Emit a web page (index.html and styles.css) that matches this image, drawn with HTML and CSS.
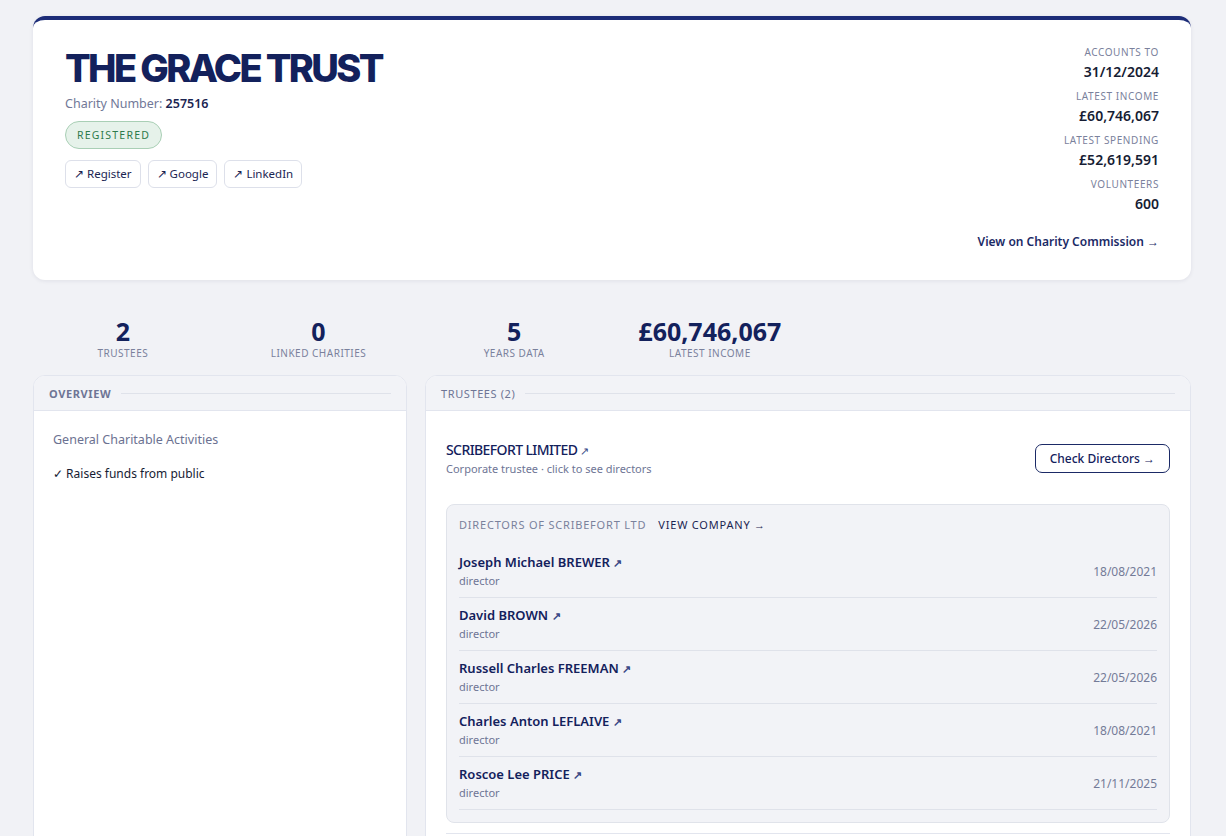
FILE: index.html
```html
<!DOCTYPE html>
<html lang="en">
<head>
    <meta charset="UTF-8">
    <meta name="viewport" content="width=device-width, initial-scale=1.0">
    <title>The Grace Trust</title>
    <link rel="stylesheet" href="styles.css">
</head>
<body>
    <div class="page">
        <div class="hero">
            <div class="hero-main">
                <h1 class="charity-name">THE GRACE TRUST</h1>
                <div class="charity-number">Charity Number: <strong>257516</strong></div>
                <span class="status-badge">REGISTERED</span>
                <div class="ext-links">
                    <a class="ext-link" href="#">↗ Register</a>
                    <a class="ext-link" href="#">↗ Google</a>
                    <a class="ext-link" href="#">↗ LinkedIn</a>
                </div>
            </div>
            <div class="hero-facts">
                <div class="fact">
                    <div class="fact-label">Accounts to</div>
                    <div class="fact-value">31/12/2024</div>
                </div>
                <div class="fact">
                    <div class="fact-label">Latest income</div>
                    <div class="fact-value">£60,746,067</div>
                </div>
                <div class="fact">
                    <div class="fact-label">Latest spending</div>
                    <div class="fact-value">£52,619,591</div>
                </div>
                <div class="fact">
                    <div class="fact-label">Volunteers</div>
                    <div class="fact-value">600</div>
                </div>
                <a class="commission-link" href="#">View on Charity Commission →</a>
            </div>
        </div>

        <div class="stats">
            <div class="stat">
                <div class="stat-value">2</div>
                <div class="stat-label">Trustees</div>
            </div>
            <div class="stat">
                <div class="stat-value">0</div>
                <div class="stat-label">Linked charities</div>
            </div>
            <div class="stat">
                <div class="stat-value">5</div>
                <div class="stat-label">Years data</div>
            </div>
            <div class="stat">
                <div class="stat-value">£60,746,067</div>
                <div class="stat-label">Latest income</div>
            </div>
        </div>

        <div class="columns">
            <div class="panel">
                <div class="panel-head"><span class="panel-title bold">Overview</span></div>
                <div class="panel-body overview">
                    <p class="activity">General Charitable Activities</p>
                    <p class="check">✓ Raises funds from public</p>
                </div>
            </div>

            <div class="panel">
                <div class="panel-head"><span class="panel-title">Trustees (2)</span></div>
                <div class="panel-body trustees">
                    <div class="trustee">
                        <div>
                            <div class="trustee-name">SCRIBEFORT LIMITED <span class="arrow">↗</span></div>
                            <div class="trustee-note">Corporate trustee · click to see directors</div>
                        </div>
                        <a class="check-btn" href="#">Check Directors →</a>
                    </div>
                    <div class="directors">
                        <div class="directors-head">
                            <span class="directors-title">Directors of Scribefort Ltd</span>
                            <a class="company-link" href="#">View company →</a>
                        </div>
                        <div class="director">
                            <div>
                                <div class="director-name">Joseph Michael BREWER <span class="arrow">↗</span></div>
                                <div class="director-role">director</div>
                            </div>
                            <div class="director-date">18/08/2021</div>
                        </div>
                        <div class="director">
                            <div>
                                <div class="director-name">David BROWN <span class="arrow">↗</span></div>
                                <div class="director-role">director</div>
                            </div>
                            <div class="director-date">22/05/2026</div>
                        </div>
                        <div class="director">
                            <div>
                                <div class="director-name">Russell Charles FREEMAN <span class="arrow">↗</span></div>
                                <div class="director-role">director</div>
                            </div>
                            <div class="director-date">22/05/2026</div>
                        </div>
                        <div class="director">
                            <div>
                                <div class="director-name">Charles Anton LEFLAIVE <span class="arrow">↗</span></div>
                                <div class="director-role">director</div>
                            </div>
                            <div class="director-date">18/08/2021</div>
                        </div>
                        <div class="director">
                            <div>
                                <div class="director-name">Roscoe Lee PRICE <span class="arrow">↗</span></div>
                                <div class="director-role">director</div>
                            </div>
                            <div class="director-date">21/11/2025</div>
                        </div>
                    </div>
                    <div class="trustee-divider"></div>
                </div>
            </div>
        </div>
    </div>
</body>
</html>
```

FILE: styles.css
```css
body {
    margin: 0;
    background: #f1f2f6;
    font-family: 'Noto Sans', 'Open Sans', sans-serif;
    color: #1b2552;
    overflow: hidden;
}
a {
    text-decoration: none;
    color: inherit;
}
p {
    margin: 0;
}
.page {
    padding: 16px 35px 0 33px;
}

/* header card */
.hero {
    display: flex;
    justify-content: space-between;
    background: #fff;
    border-radius: 12px;
    border-top: 4px solid #1d2d78;
    box-shadow: 0 1px 4px rgba(20, 30, 70, 0.08);
    padding: 24px 32px 30px 32px;
    position: relative;
    overflow: hidden;
}
.hero::before {
    content: '';
    position: absolute;
    top: -4px;
    left: 0;
    right: 0;
    height: 4px;
    background: linear-gradient(90deg, #1a2868, #2b42b5);
}
.charity-name {
    margin: 0;
    font-family: 'Inter', sans-serif;
    font-weight: 800;
    font-size: 38px;
    letter-spacing: -2.6px;
    line-height: 48px;
    color: #13215c;
}
.charity-number {
    margin-top: 3px;
    font-size: 12.5px;
    color: #717897;
}
.charity-number strong {
    color: #1b2552;
    font-weight: 600;
}
.status-badge {
    display: inline-block;
    margin-top: 9px;
    padding: 5px 11px;
    border-radius: 14px;
    background: #e6f2ea;
    border: 1px solid #a9cfb5;
    color: #2e7b4c;
    font-size: 10.5px;
    letter-spacing: 1.2px;
    line-height: 16px;
}
.ext-links {
    display: flex;
    gap: 7px;
    margin-top: 11px;
}
.ext-link {
    padding: 5px 8px;
    border: 1px solid #dde0ea;
    border-radius: 6px;
    font-size: 11.5px;
    line-height: 16px;
    color: #1b2552;
}
.hero-facts {
    text-align: right;
    display: flex;
    flex-direction: column;
    align-items: flex-end;
    padding-top: 1px;
}
.fact {
    margin-bottom: 6px;
}
.fact-label {
    font-size: 10px;
    letter-spacing: 0.6px;
    text-transform: uppercase;
    color: #7a819c;
    line-height: 14px;
}
.fact-value {
    margin-top: 2px;
    font-size: 14px;
    font-weight: 600;
    color: #161c33;
    line-height: 22px;
}
.commission-link {
    margin-top: 12px;
    font-size: 12px;
    font-weight: 600;
    color: #1b2a66;
}

/* stats row */
.stats {
    display: grid;
    grid-template-columns: repeat(6, 1fr);
    gap: 16px;
    margin-top: 35px;
}
.stat {
    text-align: center;
}
.stat-value {
    font-size: 25px;
    font-weight: 700;
    color: #13215c;
    line-height: 32px;
}
.stat-label {
    font-size: 10px;
    letter-spacing: 0.5px;
    text-transform: uppercase;
    color: #7a819c;
    line-height: 12px;
}

/* panels */
.columns {
    display: grid;
    grid-template-columns: 374px 1fr;
    gap: 18px;
    margin-top: 16px;
}
.panel {
    background: #fff;
    border: 1px solid #e2e5ee;
    border-radius: 12px;
    overflow: hidden;
    min-height: 480px;
}
.panel-head {
    display: flex;
    align-items: center;
    gap: 10px;
    height: 34px;
    padding: 0 15px;
    background: #f2f3f7;
    border-bottom: 1px solid #e2e5ee;
}
.panel-head::after {
    content: '';
    flex: 1;
    height: 1px;
    background: #dfe2ea;
}
.panel-title {
    font-size: 11px;
    letter-spacing: 0.6px;
    text-transform: uppercase;
    color: #6e7595;
}
.panel-title.bold {
    font-weight: 700;
}
.overview {
    padding: 20px 19px;
}
.activity {
    font-size: 12.5px;
    color: #6b7191;
}
.check {
    margin-top: 17px;
    font-size: 12px;
    color: #161c33;
}
.trustees {
    padding: 29px 20px 0 20px;
}
.trustee {
    display: flex;
    justify-content: space-between;
    align-items: center;
}
.trustee-name {
    font-size: 14px;
    font-weight: 500;
    letter-spacing: -0.6px;
    color: #13215c;
}
.arrow {
    font-size: 11px;
    color: #3a4a85;
}
.trustee-note {
    margin-top: 2px;
    font-size: 11px;
    color: #6e7595;
}
.check-btn {
    padding: 6px 14px;
    border: 1.5px solid #1b2a66;
    border-radius: 7px;
    font-size: 12px;
    font-weight: 500;
    color: #13215c;
    line-height: 15px;
}
.directors {
    margin-top: 28px;
    background: #f2f3f7;
    border: 1px solid #e0e3ea;
    border-radius: 8px;
    padding: 11px 12px 12px 12px;
}
.directors-head {
    display: flex;
    gap: 12px;
    font-size: 11px;
    letter-spacing: 0.8px;
    text-transform: uppercase;
    line-height: 18px;
    margin-bottom: 11px;
}
.directors-title {
    color: #7a819c;
}
.company-link {
    color: #1b2552;
}
.director {
    display: flex;
    justify-content: space-between;
    align-items: center;
    padding: 7px 0;
    border-bottom: 1px solid #dfe2ea;
    height: 38px;
}
.director-name {
    font-size: 13px;
    font-weight: 600;
    color: #13215c;
    line-height: 18px;
}
.director-role {
    font-size: 11px;
    color: #6e7595;
    line-height: 18px;
}
.director-date {
    font-size: 12px;
    color: #747b98;
}
.trustee-divider {
    margin-top: 10px;
    height: 1px;
    background: #e2e5ee;
}
```
